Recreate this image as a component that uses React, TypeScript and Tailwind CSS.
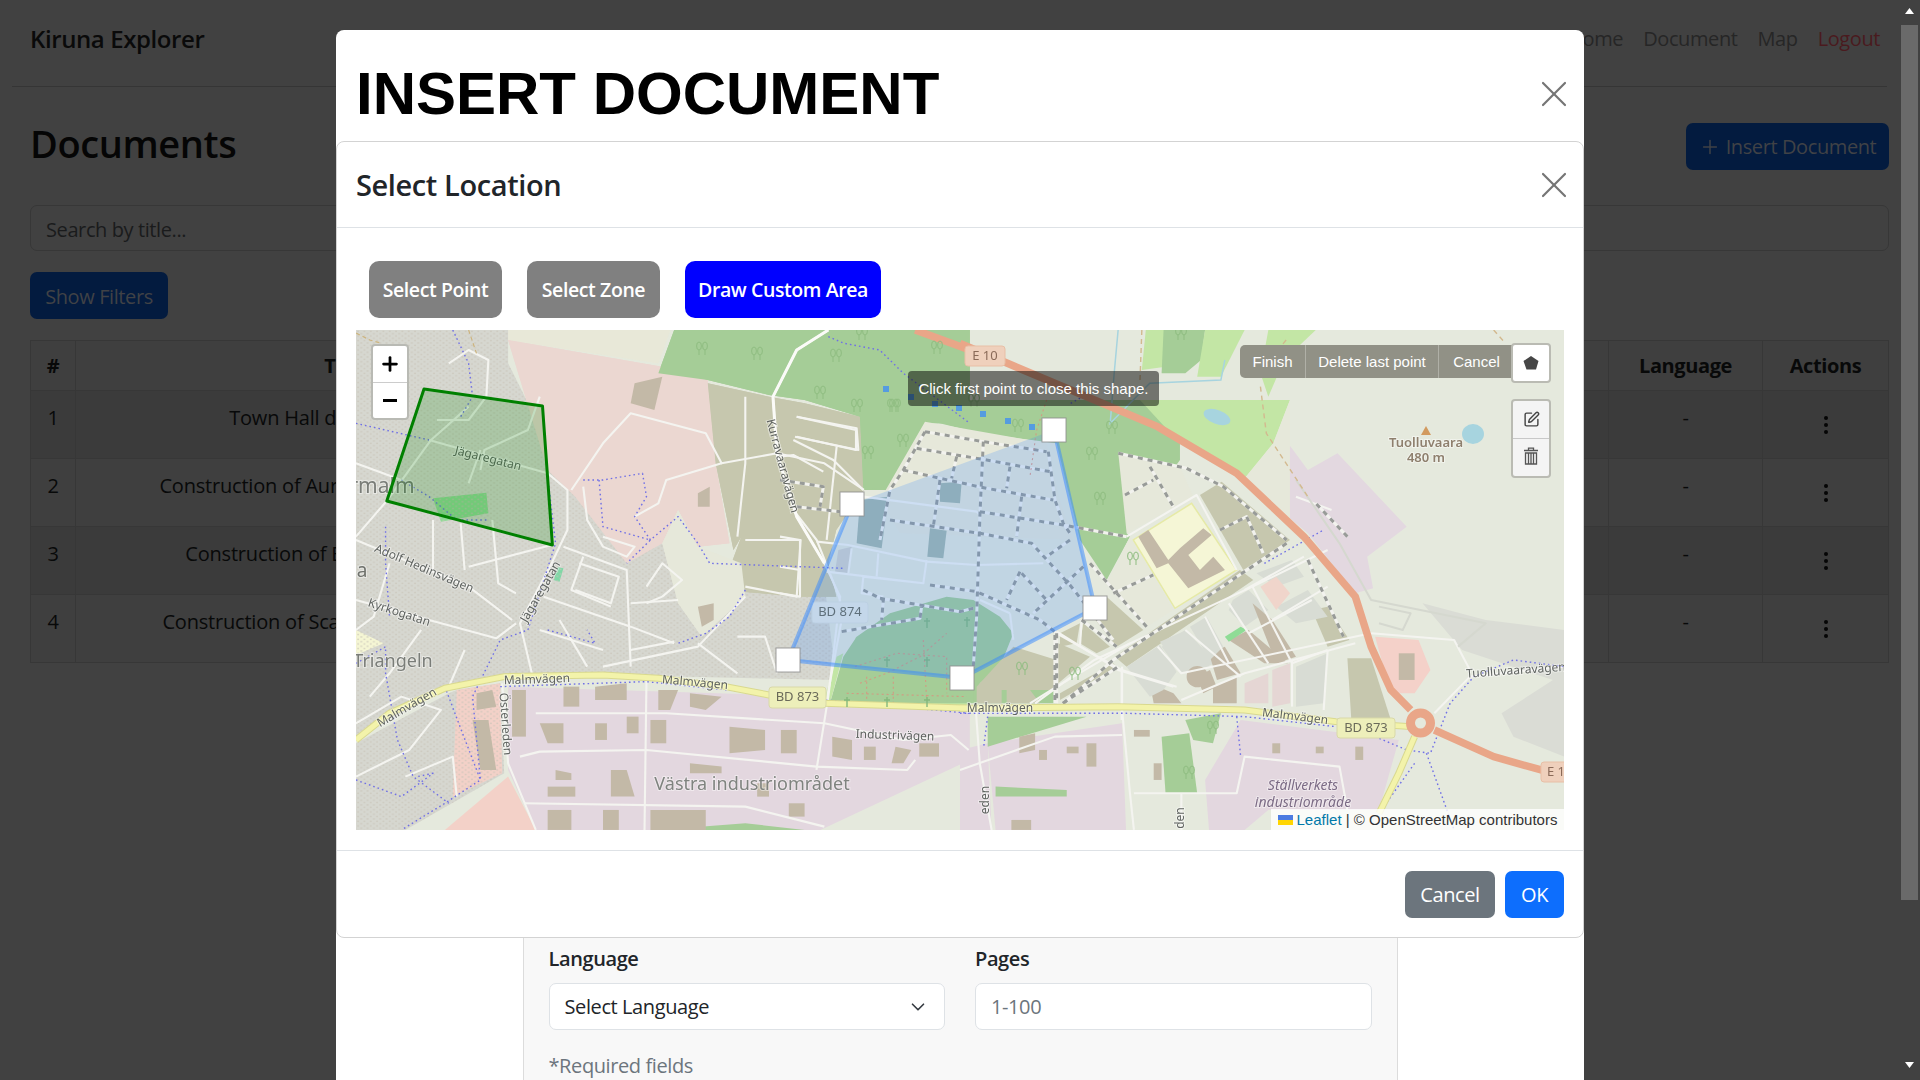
import React from "react";
import { SquarePen, X, Plus, ChevronDown } from "lucide-react";

const NS: any = { vectorEffect: "non-scaling-stroke" };
const C3 = "translate(350,330) scale(0.3953,0.3333)";
const C4 = "translate(960,330) scale(0.3953,0.3333)";
const C9 = "translate(780,400) scale(0.3333,0.3333)";

type Shape = [string, string];

const fills3: Shape[] = [
  ["#d6d7d0", "15,0 400,0 400,100 560,480 790,640 880,770 990,780 1200,760 1230,1050 450,1030 250,1075 15,1220"],
  ["#d6d7d0", "15,1240 250,1090 270,1080 380,1060 390,1330 140,1500 15,1500"],
  ["#e8e8d8", "400,0 810,0 780,100 400,30"],
  ["#ebd7d1", "400,30 790,110 905,150 925,400 960,640 880,650 830,540 790,640 700,700 570,500 500,420"],
  ["#c6c7ae", "905,160 1060,200 1150,220 1290,260 1300,480 1230,600 1210,700 1230,800 1140,800 940,780 990,620 970,660 925,400"],
  ["#e6e8da", "790,640 830,540 880,650 990,700 1000,800 890,920 830,820"],
  ["#a5cd97", "780,130 820,0 1568,0 1568,280 1450,280 1370,480 1300,480 1290,260 1150,210 1060,195 905,150"],
  ["#f3d1c8", "270,1080 380,1060 385,1330 260,1400"],
  ["#f3d1c8", "240,1500 400,1340 470,1500"],
  ["#e3d7df", "400,1070 1200,1100 1568,1150 1568,1290 1190,1500 470,1500 400,1320"],
  ["#a5cd97", "780,1500 1000,1480 1150,1500"],
  ["#f5f6d4", "15,900 85,940 15,975"],
  ["#8fdc96", "210,505 345,488 350,550 230,575"],
  ["#7fd8a6", "525,712 540,715 530,755 515,750"],
  ["#c3e6a5", "1240,1100 1200,1120 1568,1130 1568,1000 1280,920"],
];

const fills9: Shape[] = [
  ["#a5cd97", "80,0 1200,0 1200,180 1040,400 1050,410 980,540 900,420 830,130 600,100 440,60 330,260 250,270 240,40"],
  ["#e6e8da", "435,65 800,130 840,300 880,420 360,400 300,300"],
  ["#e6e8da", "1015,160 1200,200 1240,290 1040,400"],
  ["#c3e6a5", "1080,0 1530,0 1480,130 1390,240 1200,130"],
  ["#e6e8da", "1530,0 1480,130 1390,240 1530,370"],
  ["#c6c7ae", "1260,285 1325,245 1530,420 1390,510"],
  ["#c6c7ae", "1005,770 1380,510 1420,540 1040,800"],
  ["#e6e8da", "980,550 1050,410 1180,630 1100,680"],
  ["#c6c7ae", "980,590 1090,690 1010,740 930,640"],
  ["#a5cd97", "230,710 330,640 500,590 580,600 660,650 700,700 660,800 600,850 580,910 150,910 190,770"],
  ["#c3e6a5", "190,760 150,910 130,910 170,770"],
  ["#c6c7ae", "590,860 700,740 830,780 830,870 590,870"],
  ["#a5cd97", "580,870 830,870 830,910 580,910"],
  ["#c6c7ae", "590,870 665,870 665,910 590,910"],
  ["#c6c7ae", "680,870 750,870 780,910 680,910"],
  ["#c6c7ae", "840,700 900,670 890,730 840,740"],
  ["#c6c7ae", "910,670 990,740 950,760 900,730"],
  ["#c6c7ae", "835,730 930,770 835,850"],
  ["#c6c7ae", "840,900 1010,800 1000,790 840,880"],
  ["#a5b8ad", "480,250 545,245 540,310 480,305"],
  ["#a5b8ad", "240,300 325,290 305,445 230,430"],
  ["#a5b8ad", "450,385 500,392 490,475 442,470"],
  ["#d8dcd4", "1040,800 1140,735 1190,815 1150,870 1110,890"],
  ["#d8dcd4", "1140,725 1220,690 1290,800 1200,810"],
  ["#d8dcd4", "1230,680 1280,650 1330,740 1290,780"],
  ["#c3b9a7", "1250,830 1290,810 1310,860 1270,880"],
];

const fills4: Shape[] = [
  ["#e3d8e0", "760,490 830,340 880,420 955,370 1130,590 1030,680 1045,775 1000,790 880,610"],
  ["#dadcd5", "1170,820 1330,870 1528,900 1528,1280 1400,1220 1370,1150 1500,1050 1270,960"],
  ["#f4d1c9", "1050,920 1160,930 1190,1020 1150,1090 1090,1090"],
  ["#c3b9a7", "1110,970 1150,970 1150,1050 1110,1050"],
  ["#e3d7df", "70,1240 410,1180 420,1500 90,1500"],
  ["#e3d7df", "710,1170 1110,1230 1060,1440 780,1440 720,1500 630,1500 620,1350"],
  ["#e3d7df", "0,1260 70,1240 80,1500 0,1500"],
  ["#a5cd97", "570,1170 660,1150 640,1240 590,1230"],
  ["#a5cd97", "510,1220 580,1210 600,1390 520,1390"],
  ["#a5cd97", "70,1160 320,1160 70,1250"],
  ["#a5cd97", "90,1370 270,1380 270,1400 90,1400"],
  ["#c3e6a5", "470,0 540,0 520,110 460,120"],
  ["#a5cd97", "515,0 620,0 610,90 570,130 510,130"],
  ["#c3e6a5", "620,0 720,0 660,140 600,140"],
  ["#c3e6a5", "780,0 900,0 820,90 780,200 760,130"],
  ["#c6c7ae", "980,985 1040,985 1090,1170 990,1170"],
  ["#c6c7ae", "890,840 930,830 985,930 930,950"],
  ["#d8dcd4", "840,690 870,740 800,770 750,730"],
  ["#d8dcd4", "690,810 730,780 780,840 720,890 680,840"],
  ["#d8dcd4", "800,830 880,780 930,860 850,880"],
  ["#d8dcd4", "510,950 570,900 650,1000 560,1030"],
  ["#d8dcd4", "850,1010 930,970 920,1120 850,1130"],
  ["#c3b9a7", "680,930 730,900 830,1000 770,1000"],
  ["#c3b9a7", "630,970 670,950 710,1030 650,1050"],
  ["#c3b9a7", "740,820 790,870 850,980 800,1000"],
  ["#c3b9a7", "640,1070 700,1040 700,1120 640,1120"],
  ["#e5d6d4", "720,1060 780,1030 780,1120 720,1120"],
  ["#e5d6d4", "790,1020 835,1000 835,1120 790,1130"],
  ["#f0d5cb", "760,770 800,740 835,790 800,840"],
  ["#8fdc96", "670,920 710,890 725,900 680,935"],
  ["#c3b9a7", "480,1060 540,1090 560,1120 490,1120"],
];

const roads3 = [
  "15,620 95,510 205,330 300,230",
  "200,330 500,430 550,480 550,600 510,700 430,880 460,1030",
  "15,630 300,770 410,870",
  "15,810 200,870 370,925 420,880",
  "385,1060 400,1300 470,1500",
  "470,1150 800,1150 1200,1180 1400,1230 1520,1215 1565,1260",
  "430,1280 480,1265 750,1260 1180,1310 1410,1320 1430,1290",
  "750,1050 745,1500",
  "440,1420 1000,1430 1200,1490",
  "1210,0 1130,60 1070,200 1080,370 1130,560 1200,700 1240,800 1210,1100 1180,1320",
  "560,480 640,340 710,250 900,310 940,400 1080,370 1200,400 1300,480",
  "940,400 800,450 780,520 720,560",
  "250,100 300,60 350,90 345,200 300,270 220,270",
  "590,470 600,570 640,650 700,680 720,650 640,620",
  "540,650 700,720 710,1010",
  "490,800 710,890 820,940",
  "300,710 510,645",
  "210,570 210,720",
  "280,580 290,720",
  "360,570 375,760 420,790",
  "640,1010 880,950 1000,800",
  "15,1180 130,1100 230,1140 150,1260 15,1340",
  "140,1340 260,1280 270,1400",
  "480,900 640,960",
  "750,770 790,700 840,750 790,800 750,820",
  "580,700 680,740 660,820 570,780",
  "1000,200 1000,400 980,620",
  "1130,260 1280,300 1280,360 1130,320",
  "1000,630 1140,630 1130,800 1000,770",
  "980,920 1050,920 1080,1030",
  "880,940 980,1030",
  "480,200 450,300 340,360 330,420",
  "100,700 60,860 15,900",
  "180,900 100,1030 50,1100",
  "290,960 250,1070",
  "710,820 830,810",
  "710,960 820,935",
  "590,680 560,780 660,830",
  "530,870 600,1010",
  "330,360 300,460",
  "15,400 130,450",
];
const roads9 = [
  "110,425 205,435 440,485 590,495 790,490",
  "140,515 430,550 250,530 245,580 310,590",
  "250,290 590,335 600,345",
  "150,520 180,600 185,660 140,900",
  "215,445 205,520",
  "295,460 290,530",
  "440,480 430,550",
  "50,50 230,85 235,150 45,110",
  "40,120 160,180 250,270",
  "170,140 140,420",
  "0,170 40,165 130,215",
  "40,330 110,420 150,520",
  "0,410 60,420 60,590 0,580",
  "0,500 60,510",
  "690,640 700,720",
  "600,600 690,640",
  "830,700 1025,810 1190,860",
  "1025,810 1025,960",
  "750,910 830,860 1050,730",
  "905,660 900,740",
  "1040,410 1250,285 1370,510",
];
const roads4 = [
  "190,1120 340,990 740,770 930,660",
  "410,1010 410,1140",
  "245,905 400,1020 540,1070",
  "740,770 840,1000 930,960",
  "680,820 780,1000",
  "570,900 710,1040",
  "500,950 560,1030 1040,910",
  "790,870 930,770",
  "730,910 890,810",
  "560,1110 720,1030 1000,940",
  "620,860 680,1000",
  "840,990 840,1130",
  "930,960 920,1140",
  "1040,910 1250,930 1290,1020",
  "870,680 720,780",
  "410,1140 430,1390 440,1500",
  "0,1320 240,1220 410,1215",
  "440,1390 700,1390 720,1280 960,1310 980,1440",
  "40,1140 50,1300 80,1500",
  "560,1390 560,1500",
  "1200,1150 1290,1040 1528,1010",
  "850,500 940,540",
];
const paleRoads4 = ["850,450 960,640 1040,810 1330,880 1260,950", "1060,830 1140,850 1120,900 1060,880"];
const paths9 = [
  "435,95 610,125 800,155",
  "435,95 370,210 330,270 300,420",
  "410,145 620,180 810,215",
  "370,210 480,235 620,265 820,300",
  "610,125 600,340 590,650 580,800",
  "805,155 825,300 850,370 870,400",
  "530,170 515,235",
  "690,200 680,265",
  "725,290 710,410",
  "480,240 460,380",
  "330,360 600,400 755,430 870,555 1000,720",
  "600,335 850,375 1040,410",
  "870,420 800,470",
  "720,515 680,600",
  "725,520 800,600",
  "910,500 760,640",
  "930,490 1100,680",
  "1000,580 1120,525",
  "1015,160 1220,205 1330,260 1520,420",
  "1110,200 1180,320",
  "1035,285 1120,240",
  "1320,390 1400,350 1450,460",
  "300,595 540,635 580,625",
  "450,555 590,575 780,660 830,700",
  "185,695 420,655 425,620",
  "830,700 830,910",
  "850,910 1000,780 1520,430",
  "905,660 1010,740",
  "0,240 130,260 120,320",
  "50,320 180,335",
  "250,570 310,600 305,660",
];
const paths4 = ["980,620 900,520", "880,690 970,920", "240,915 240,1120", "260,1120 400,1010"];
const dots3 = [
  "260,0 300,100 310,200 280,260",
  "15,280 200,330",
  "130,450 200,500 270,570 350,570",
  "500,440 520,640 450,900 380,930 310,1100 330,1350 240,1420 130,1500",
  "590,450 640,450 740,430 750,500 720,560 760,630 830,560 880,640 910,700 1250,715",
  "630,450 640,590 760,630 700,700",
  "1000,780 960,860 900,910 830,940",
  "500,900 620,940 600,900",
  "90,590 90,700 100,860",
  "15,1000 90,950 90,1030 120,1230 160,1340 250,1420",
  "240,1070 275,1180 330,1350",
  "15,1350 130,1400 210,1330 170,1340",
  "380,1070 750,1055 1200,1110 1568,1150",
  "1210,20 1250,40 1340,60 1400,130 1568,280",
];
const dots4 = [
  "0,1150 420,1150 720,1160 950,1190",
  "280,220 310,200",
  "770,700 920,600",
  "70,1160 60,1250",
  "700,1160 710,1280",
  "1050,1220 1130,1260 1190,1270 1240,1120 1300,1040 1400,990 1528,1010",
  "1180,1270 1250,1500",
  "1150,1300 1060,1450",
];
const reds = [
  "800,0 770,90 750,230",
  "225,800 350,760 500,770 500,880",
  "240,850 320,820 420,770 500,700",
  "260,830 260,910",
  "340,830 340,910",
  "430,720 440,900",
  "200,880 560,890",
];
const trees: [number, number][] = [
  [857, 405], [895, 405], [903, 440], [868, 452], [1018, 425], [1092, 453], [1100, 498], [1133, 558], [1022, 668],
  [702, 348], [757, 353], [820, 392], [836, 355], [862, 333], [893, 405], [937, 347], [1075, 673], [1112, 427],
  [1189, 772], [1213, 727], [1181, 333], [974, 400],
];
const crosses: [number, number][] = [
  [887, 662], [927, 662], [887, 702], [927, 702], [847, 702], [967, 622], [927, 623],
];

function Fills({ items, t }: { items: Shape[]; t: string }) {
  return (
    <g transform={t}>
      {items.map(([c, p], i) => (
        <polygon key={i} points={p} fill={c} />
      ))}
    </g>
  );
}

function Lines({ items, t, c, w, dash, op }: { items: string[]; t: string; c: string; w: number; dash?: string; op?: number }) {
  return (
    <g transform={t} fill="none" stroke={c} strokeWidth={w} strokeDasharray={dash} strokeOpacity={op} strokeLinejoin="round">
      {items.map((p, i) => (
        <polyline key={i} points={p} {...NS} />
      ))}
    </g>
  );
}

function Label({ x, y, r = 0, s = 12, c = "#5f6360", t, w = 400, i = false, halo = true, f = "'Noto Sans',sans-serif" }: { x: number; y: number; r?: number; s?: number; c?: string; t: string; w?: number; i?: boolean; halo?: boolean; f?: string }) {
  return (
    <text
      x={x}
      y={y}
      transform={r ? `rotate(${r} ${x} ${y})` : undefined}
      textAnchor="middle"
      dominantBaseline="middle"
      fontSize={s}
      fontWeight={w}
      fontStyle={i ? "italic" : "normal"}
      fontFamily={f}
      fill={c}
      stroke={halo ? "#ffffff" : "none"}
      strokeOpacity={0.45}
      strokeWidth={halo ? 2 : 0}
      paintOrder="stroke"
    >
      {t}
    </text>
  );
}

function Badge({ x, y, w, h, t, bg, c = "#6a6a5a", b = "#d9d9a8" }: { x: number; y: number; w: number; h: number; t: string; bg: string; c?: string; b?: string }) {
  return (
    <g>
      <rect x={x} y={y} width={w} height={h} rx={3} fill={bg} stroke={b} strokeWidth={1} />
      <Label x={x + w / 2} y={y + h / 2 + 0.5} t={t} s={13} c={c} halo={false} />
    </g>
  );
}

function Handle({ x, y }: { x: number; y: number }) {
  return <rect x={x - 12} y={y - 12} width={24} height={24} fill="#ffffff" stroke="#8e8e8e" strokeOpacity={0.85} strokeWidth={1} />;
}

function MapArt() {
  return (
    <svg viewBox="356 330 1208 500" width={1208} height={500} className="block">
      <defs>
        <pattern id="houses" width="16" height="14" patternUnits="userSpaceOnUse">
          <rect x="2" y="2" width="5" height="4" fill="#c9c4b8" />
          <rect x="10" y="9" width="5" height="4" fill="#c9c4b8" />
        </pattern>
        <filter id="soft" x="356" y="330" width="1208" height="500" filterUnits="userSpaceOnUse">
          <feGaussianBlur stdDeviation="0.45" />
        </filter>
      </defs>
      <g filter="url(#soft)">
        <rect x="356" y="330" width="1208" height="500" fill="#e5e9dd" />
        <Fills items={fills3} t={C3} />
        <g transform={C3}>
          <polygon points="15,0 400,0 400,100 560,480 790,640 880,770 990,780 1200,760 1230,1050 450,1030 250,1075 15,1220" fill="url(#houses)" opacity="0.7" />
          <polygon points="15,1240 250,1090 270,1080 380,1060 390,1330 140,1500 15,1500" fill="url(#houses)" opacity="0.7" />
        </g>
        <Fills items={fills3.slice(2, 7)} t={C3} />
        <Fills items={fills4} t={C4} />
        <Fills items={fills9} t={C9} />
        <g transform={C9}>
          <polygon points="1060,420 1235,310 1370,510 1185,625" fill="#f5f6d6" stroke="#e6eaa6" strokeWidth="1.5" {...NS} />
          <polygon points="1075,410 1105,390 1165,480 1200,445 1270,385 1295,405 1225,465 1260,510 1300,470 1335,510 1225,565 1165,490 1130,505" fill="#c3b9a7" />
          <polygon points="175,450 215,440 205,520 165,515" fill="#d3d3cd" />
          <circle cx="1252" cy="830" r="32" fill="#c3b9a7" />
        </g>
        <g transform={C3} fill="#c3b9a7">
          <polygon points="720,160 790,140 770,240 710,220" />
          <polygon points="880,490 910,470 910,530 880,530" />
          <polygon points="880,830 920,820 920,870 890,890" />
          <polygon points="620,1070 700,1060 700,1110 620,1110" />
          <polygon points="410,1080 445,1080 445,1220 410,1220" />
          <polygon points="540,1070 580,1070 580,1130 540,1130" />
          <polygon points="780,1080 830,1080 810,1140 780,1140" />
          <polygon points="860,1090 940,1100 900,1140 860,1130" />
          <polygon points="700,1160 730,1160 730,1210 700,1210" />
          <polygon points="760,1170 800,1170 800,1240 760,1240" />
          <polygon points="960,1190 1050,1200 1050,1260 960,1270" />
          <polygon points="1090,1200 1130,1200 1130,1270 1090,1270" />
          <polygon points="1220,1220 1270,1230 1270,1290 1220,1280" />
          <polygon points="1380,1250 1420,1260 1400,1300 1370,1300" />
          <polygon points="660,1320 700,1320 720,1400 660,1400" />
          <polygon points="500,1370 570,1370 570,1400 500,1400" />
          <polygon points="860,1300 940,1310 940,1330 860,1330" />
          <polygon points="1110,1420 1150,1420 1150,1460 1110,1460" />
          <polygon points="310,1170 350,1170 370,1320 330,1320" />
          <polygon points="320,1090 360,1080 370,1130 320,1140" />
          <polygon points="480,1180 540,1180 540,1240 500,1240" />
          <polygon points="620,1180 650,1180 650,1230 620,1230" />
          <polygon points="1300,1250 1330,1250 1330,1290 1300,1290" />
          <polygon points="1440,1240 1490,1240 1490,1280 1440,1280" />
          <polygon points="520,1320 560,1330 560,1350 520,1350" />
          <polygon points="1030,1360 1060,1360 1060,1400 1030,1400" />
          <polygon points="760,1440 900,1440 900,1500 760,1500" />
          <polygon points="500,1440 560,1440 560,1500 500,1500" />
          <polygon points="640,1440 680,1440 680,1500 640,1500" />
        </g>
        <g transform={C4} fill="#c3b9a7">
          <polygon points="150,1220 190,1210 190,1260 150,1270" />
          <polygon points="320,1240 345,1240 345,1310 320,1310" />
          <polygon points="440,1200 480,1200 480,1220 440,1220" />
          <polygon points="490,1300 510,1300 510,1350 490,1350" />
          <polygon points="790,1240 810,1240 810,1270 790,1270" />
          <polygon points="900,1250 920,1250 920,1270 900,1270" />
          <polygon points="1000,1250 1020,1250 1020,1290 1000,1290" />
          <polygon points="130,1470 180,1470 180,1500 130,1500" />
          <polygon points="200,1260 220,1260 220,1290 200,1290" />
          <polygon points="270,1250 300,1250 300,1270 270,1270" />
        </g>
        <g fill="#a7d4df">
          <ellipse cx="1217" cy="417" rx="14" ry="7" transform="rotate(20 1217 417)" />
          <ellipse cx="1473" cy="434" rx="11" ry="10" />
        </g>
        <g transform={C4} fill="none" stroke="#a7d4df" strokeWidth="1.5">
          <polyline points="400,0 390,130 380,280 480,160 660,150 670,90" {...NS} />
        </g>
        <Lines items={roads3} t={C3} c="#f4f4f0" w={2.1} />
        <Lines items={roads9} t={C9} c="#f4f4f0" w={2.1} />
        <Lines items={roads4} t={C4} c="#f4f4f0" w={2.1} />
        <Lines items={paleRoads4} t={C4} c="#d5d8cf" w={2} />
        <Lines items={["1210,0 1130,60 1070,200 1080,370 1130,560 1200,700"]} t={C3} c="#fbfbf8" w={3} />
        <Lines items={paths9} t={C9} c="#f2f2ee" w={3} />
        <Lines items={paths4} t={C4} c="#f2f2ee" w={3} />
        <Lines items={paths9} t={C9} c="#989b98" w={3} dash="5 5" />
        <Lines items={paths4} t={C4} c="#989b98" w={3} dash="5 5" />
        <Lines items={dots3} t={C3} c="#6f6fe6" w={1.4} dash="1.6 3" />
        <Lines items={dots4} t={C4} c="#6f6fe6" w={1.4} dash="1.6 3" />
        <Lines items={reds} t={C9} c="#dd8f7d" w={1.1} dash="2 3" op={0.8} />
        <Lines items={["0,0 50,30 80,40", "100,120 130,230", "300,0 320,70"]} t={C3} c="#cdb47e" w={1.2} dash="4 3" />
        <Lines items={["460,0 455,160", "760,170 775,310 880,500", "1350,0 1380,40", "825,30 805,60"]} t={C4} c="#d3b98f" w={1.4} dash="5 4" />
        <Lines items={["15,1230 100,1150 240,1075 390,1040 640,1035 780,1045 950,1070 1060,1095 1200,1120 1568,1135"]} t={C3} c="#d9d98f" w={7} />
        <Lines items={["0,1135 400,1130 720,1140 950,1175 1140,1190", "1150,1220 1110,1330 1060,1450"]} t={C4} c="#d9d98f" w={7} />
        <Lines items={["15,1230 100,1150 240,1075 390,1040 640,1035 780,1045 950,1070 1060,1095 1200,1120 1568,1135"]} t={C3} c="#f3f3aa" w={5} />
        <Lines items={["0,1135 400,1130 720,1140 950,1175 1140,1190", "1150,1220 1110,1330 1060,1450"]} t={C4} c="#f3f3aa" w={5} />
        <Lines items={["1430,0 1568,60"]} t={C3} c="#e9a688" w={7.5} />
        <Lines items={["0,40 120,100 300,190 500,290 700,430 870,620 1000,800 1040,950 1090,1080 1140,1140", "1200,1200 1350,1280 1470,1320 1528,1340"]} t={C4} c="#e9a688" w={7.5} />
        <circle cx="1420.5" cy="723" r="10" fill="#e5e9dd" stroke="#e9a688" strokeWidth="9" />
        {trees.map(([x, y], i) => (
          <g key={i} fill="none" stroke="#8fbd81" strokeWidth="1">
            <ellipse cx={x - 3} cy={y - 2} rx="2.4" ry="4" />
            <ellipse cx={x + 3} cy={y - 2} rx="2.4" ry="4" />
            <path d={`M${x - 3} ${y + 2}v5M${x + 3} ${y + 2}v5`} />
          </g>
        ))}
        {crosses.map(([x, y], i) => (
          <path key={i} d={`M${x} ${y - 5}v10M${x - 3} ${y - 2}h6`} stroke="#84b87c" strokeWidth="1.4" fill="none" />
        ))}

        <Label x={382} y={487} s={21} t="rmalm" c="#7a7d78" />
        <Label x={362} y={572} s={19} t="a" c="#6f726d" />
        <Label x={488} y={459} r={14} t="Jägaregatan" />
        <Label x={424} y={569} r={23} t="Adolf Hedinsvägen" />
        <Label x={541} y={592} r={-60} t="Jägaregatan" />
        <Label x={399} y={613} r={18} t="Kyrkogatan" />
        <Label x={393} y={662} s={18} t="Triangeln" c="#7a7d78" />
        <Label x={407} y={708} r={-30} t="Malmvägen" />
        <Label x={537} y={680} r={-2} t="Malmvägen" />
        <Label x={695} y={683} r={5} t="Malmvägen" />
        <Label x={1000} y={709} t="Malmvägen" />
        <Label x={1295} y={717} r={7} t="Malmvägen" />
        <Label x={505} y={724} r={86} t="Österleden" />
        <Label x={782} y={466} r={75} t="Kurravaaravägen" />
        <Label x={895} y={736} r={2} t="Industrivägen" />
        <Label x={752} y={785} s={18} t="Västra industriområdet" c="#7f837f" />
        <Label x={1426} y={443} s={13} w={600} c="#8e7f6d" t="Tuolluvaara" />
        <Label x={1426} y={458} s={13} w={600} c="#8e7f6d" t="480 m" />
        <polygon points="1426,426 1431,435 1421,435" fill="#d29a5f" />
        <Label x={1516} y={671} r={-4} t="Tuolluvaaravägen" />
        <Label x={1303} y={786} s={14} i c="#7b6b85" t="Ställverkets" />
        <Label x={1303} y={803} s={14} i c="#7b6b85" t="industriområde" />
        <Label x={986} y={800} r={-90} t="eden" />
        <Label x={1181} y={818} r={-90} t="den" />
        <Badge x={965} y={346} w={40} h={20} t="E 10" bg="#efd0bc" b="#e8bfa6" c="#8a6a58" />
        <Badge x={1541} y={762} w={30} h={20} t="E 1" bg="#efd0bc" b="#e8bfa6" c="#8a6a58" />
        <Badge x={769} y={687} w={57} h={21} t="BD 873" bg="#edefba" />
        <Badge x={1337} y={718} w={58} h={20} t="BD 873" bg="#edefba" />
        <Badge x={812} y={602} w={56} h={21} t="BD 874" bg="#e9ece5" b="#dfe3dc" />
      </g>

      <polygon points="424,389 542.5,406 552.4,545 386.8,501" fill="#008000" fillOpacity="0.2" stroke="#008000" strokeWidth="3" strokeLinejoin="round" />

      <polygon points="1054,430 1095,608 962,678 788,660 852,504" fill="#3388ff" fillOpacity="0.2" stroke="none" />
      <polyline points="1054,430 1095,608 962,678 788,660 852,504" fill="none" stroke="#3388ff" strokeOpacity="0.5" strokeWidth="4" strokeLinejoin="round" />
      <g fill="#3388ff" fillOpacity="0.7">
        <rect x="883" y="386" width="6" height="6" />
        <rect x="908" y="394" width="6" height="6" />
        <rect x="932" y="401" width="6" height="6" />
        <rect x="956" y="405" width="6" height="6" />
        <rect x="980" y="411" width="6" height="6" />
        <rect x="1005" y="418" width="6" height="6" />
        <rect x="1029" y="424" width="6" height="6" />
      </g>
      <Handle x={1054} y={430} />
      <Handle x={852} y={504} />
      <Handle x={788} y={660} />
      <Handle x={962} y={678} />
      <Handle x={1095} y={608} />
    </svg>
  );
}

const rows = [
  ["1", "Town Hall demolition (64)"],
  ["2", "Construction of Aurora Center (ref. n. 48)"],
  ["3", "Construction of Block 1 - 2 (ref. 2/3)"],
  ["4", "Construction of Scandic Hotel (ref. n. 48)"],
];

function Kebab() {
  return (
    <svg width="6" height="20" viewBox="0 0 6 20" className="mx-auto mt-[24px] block" fill="#050505">
      <circle cx="3" cy="3" r="2" />
      <circle cx="3" cy="10" r="2" />
      <circle cx="3" cy="17" r="2" />
    </svg>
  );
}

function Page() {
  return (
    <div className="h-full min-w-0 flex-1 bg-[#414141] text-[20px] leading-[30px] text-[#080909]">
      <nav className="mx-[12px] flex h-[87px] items-center justify-between border-b border-[#353535] pb-[8px] pl-[18px] pr-[7px]">
        <span className="text-[24px] font-semibold text-[#0a0a0a]">Kiruna Explorer</span>
        <div className="flex gap-[20px] text-[#262626]">
          <a>Home</a>
          <a>Document</a>
          <a>Map</a>
          <a className="text-[#4a1a1e]">Logout</a>
        </div>
      </nav>
      <main className="pl-[30px] pr-[10px]">
        <div className="flex h-[118px] items-center justify-between pb-[2px]">
          <h1 className="mb-[4px] text-[38px] font-semibold leading-[48px] text-[#050505]">Documents</h1>
          <button className="mt-[2px] flex h-[47px] w-[203px] items-center justify-center gap-[5px] rounded-[7px] bg-[#031b3f] pt-[1px] text-[#404246]">
            <Plus size={22} strokeWidth={1.6} />
            Insert Document
          </button>
        </div>
        <div className="flex h-[46px] items-center rounded-[7px] border border-[#373737] pl-[15px] pt-[3px] text-[#1a1b1c]">Search by title...</div>
        <button className="mt-[21px] block h-[47px] w-[138px] rounded-[7px] bg-[#031b3f] pt-[2px] text-[#404246]">Show Filters</button>
        <table className="mt-[21px] w-[1859px] table-fixed border-collapse">
          <colgroup>
            <col className="w-[45px]" />
            <col className="w-[540px]" />
            <col />
            <col className="w-[154px]" />
            <col className="w-[126px]" />
          </colgroup>
          <thead>
            <tr className="h-[50px] bg-[#3f3f3f] font-bold">
              <th className="border border-[#373737]">#</th>
              <th className="border border-[#373737]">Title</th>
              <th className="border border-[#373737]" />
              <th className="border border-[#373737]">Language</th>
              <th className="border border-[#373737]">Actions</th>
            </tr>
          </thead>
          <tbody>
            {rows.map(([n, t], i) => (
              <tr key={n} className={i % 2 === 0 ? "h-[68px] bg-[#3b3b3b]" : "h-[68px] bg-[#3f3f3f]"}>
                <td className="border border-[#373737] pt-[12px] text-center align-top">{n}</td>
                <td className="whitespace-nowrap border border-[#373737] pt-[12px] text-center align-top tracking-[-0.01em]">{t}</td>
                <td className="border border-[#373737]" />
                <td className="border border-[#373737] pt-[12px] text-center align-top">-</td>
                <td className="border border-[#373737] align-top"><Kebab /></td>
              </tr>
            ))}
          </tbody>
        </table>
      </main>
    </div>
  );
}

function FakeScrollbar() {
  return (
    <div className="flex h-full w-[21px] shrink-0 flex-col items-start bg-[#414141] pl-[2px]">
      <svg width="17" height="25" viewBox="0 0 17 25" className="block">
        <polygon points="8.5,8 13,14 4,14" fill="#ffffff" />
      </svg>
      <div className="h-[875px] w-[17px] bg-[#6a6a6a]" />
      <div className="flex-1" />
      <svg width="17" height="25" viewBox="0 0 17 25" className="block">
        <polygon points="4,7 13,7 8.5,13" fill="#ffffff" />
      </svg>
    </div>
  );
}

function LocationModal() {
  return (
    <div className="absolute left-0 top-0 z-10 h-[797px] w-full rounded-[8px] border border-[#d3d3d3] bg-white">
      <div className="flex h-[86px] items-center justify-between border-b border-[#dee2e6] pl-[19px] pr-[7px]">
        <h2 className="text-[29px] font-semibold leading-[36px] text-[#212529]">Select Location</h2>
        <X size={44} strokeWidth={1.2} className="text-[#757575]" />
      </div>
      <div className="flex h-[622px] flex-col px-[19px] pt-[33px]">
        <div className="flex gap-[25px] pl-[13px]">
          <button className="h-[57px] w-[133px] rounded-[10px] bg-[#808080] text-[19.5px] font-semibold text-white">Select Point</button>
          <button className="h-[57px] w-[133px] rounded-[10px] bg-[#808080] text-[19.5px] font-semibold text-white">Select Zone</button>
          <button className="h-[57px] w-[196px] rounded-[10px] bg-[#0000ff] text-[19.5px] font-semibold text-white">Draw Custom Area</button>
        </div>
        <div className="relative mt-[12px] h-[500px] w-[1208px] overflow-hidden font-['Liberation_Sans',sans-serif] text-[15px] leading-none tracking-normal">
          <MapArt />
          <div className="absolute left-[15px] top-[14px] flex h-[76px] w-[38px] flex-col overflow-hidden rounded-[4px] border-[2px] border-[#b9bab4] bg-white">
            <div className="flex h-[37px] items-center justify-center border-b border-[#ccc]"><Plus size={22} strokeWidth={3} className="text-black" /></div>
            <div className="flex flex-1 items-center justify-center"><div className="h-[3px] w-[14px] bg-black" /></div>
          </div>
          <div className="absolute left-[552px] top-[41px] flex h-[35px] w-[251px] items-center justify-center rounded-[4px] bg-[#000000]/50 text-white">Click first point to close this shape.</div>
          <div className="absolute left-[884px] top-[15px] flex h-[33px] w-[274px] items-center rounded-l-[5px] bg-[#919186] text-white">
            <span className="flex h-full w-[66px] items-center justify-center border-r border-[#b0b0a7]">Finish</span>
            <span className="flex h-full w-[133px] items-center justify-center border-r border-[#b0b0a7]">Delete last point</span>
            <span className="flex h-full flex-1 items-center justify-center">Cancel</span>
          </div>
          <div className="absolute left-[1155px] top-[13px] flex h-[40px] w-[40px] items-center justify-center rounded-[4px] border-[2px] border-[#babbb3] bg-white">
            <svg width="16" height="16" viewBox="0 0 16 16"><polygon points="8,1 15.5,6 13,14.5 3.5,14.5 0.5,6" fill="#464646" /></svg>
          </div>
          <div className="absolute left-[1155px] top-[69px] flex h-[79px] w-[40px] flex-col rounded-[4px] border-[2px] border-[#babbb3] bg-[#f4f4f4]">
            <div className="flex h-[38px] items-center justify-center border-b border-[#c8c8c8]"><SquarePen size={17} strokeWidth={2} className="text-[#444]" /></div>
            <div className="flex flex-1 items-center justify-center pb-[3px]">
              <svg width="16" height="18" viewBox="0 0 16 18" fill="none" stroke="#555" strokeWidth="1.3">
                <path d="M1 3.5h14M5.5 3.5V1.2h5v2.3M2.5 6h11v11h-11zM5.5 6v11M8 6v11M10.5 6v11" />
              </svg>
            </div>
          </div>
          <div className="absolute bottom-0 right-0 flex h-[21px] w-[293px] items-center justify-center gap-[4px] bg-white/80 text-[15px] text-[#333]">
            <svg width="15" height="10" viewBox="0 0 15 10"><rect width="15" height="5" fill="#4C7BE1" /><rect y="5" width="15" height="5" fill="#FFD500" /></svg>
            <span><span className="text-[#0078a8]">Leaflet</span> | © OpenStreetMap contributors</span>
          </div>
        </div>
      </div>
      <div className="flex h-[88px] items-start justify-end gap-[10px] border-t border-[#dee2e6] pr-[19px] pt-[20px]">
        <button className="h-[47px] w-[90px] rounded-[7px] bg-[#6c757d] pt-[1px] text-white">Cancel</button>
        <button className="h-[47px] w-[59px] rounded-[7px] bg-[#0d6efd] pt-[1px] text-white">OK</button>
      </div>
    </div>
  );
}

function InsertModal() {
  return (
    <div className="absolute bottom-0 left-[336px] top-[30px] z-20 w-[1248px] overflow-hidden rounded-t-[8px] bg-white text-[#212529]">
      <div className="flex h-[111px] items-center justify-between pl-[20px] pr-[8px] pt-[16px]">
        <h1 className="font-['Liberation_Sans',sans-serif] text-[60px] font-bold leading-none tracking-normal text-black">INSERT DOCUMENT</h1>
        <X size={44} strokeWidth={1.2} className="text-[#757575]" />
      </div>
      <div className="relative flex h-[calc(100%-111px)] justify-center">
        <LocationModal />
        <div className="h-full w-[875px] border-x border-[#dcdcdc] bg-[#f8f8f8] px-[25px] pt-[806px]">
          <div className="grid grid-cols-2 gap-x-[30px]">
            <div>
              <div className="mb-[12px] font-semibold leading-[24px]">Language</div>
              <div className="flex h-[47px] items-center justify-between rounded-[7px] border border-[#dee2e6] bg-white pl-[15px] pr-[15px] pt-[1px]">
                Select Language
                <ChevronDown size={22} strokeWidth={1.8} className="text-[#343a40]" />
              </div>
            </div>
            <div>
              <div className="mb-[12px] font-semibold leading-[24px]">Pages</div>
              <div className="flex h-[47px] items-center rounded-[7px] border border-[#dee2e6] bg-white pl-[15px] pt-[1px] text-[#6c757d]">1-100</div>
            </div>
          </div>
          <div className="mt-[21px] text-[#6c757d]">*Required fields</div>
        </div>
      </div>
    </div>
  );
}

export default function App() {
  return (
    <div className="relative flex h-[1080px] w-[1920px] overflow-hidden font-['Open_Sans',sans-serif] text-[20px] leading-[30px] tracking-[-0.02em]">
      <Page />
      <FakeScrollbar />
      <InsertModal />
    </div>
  );
}
